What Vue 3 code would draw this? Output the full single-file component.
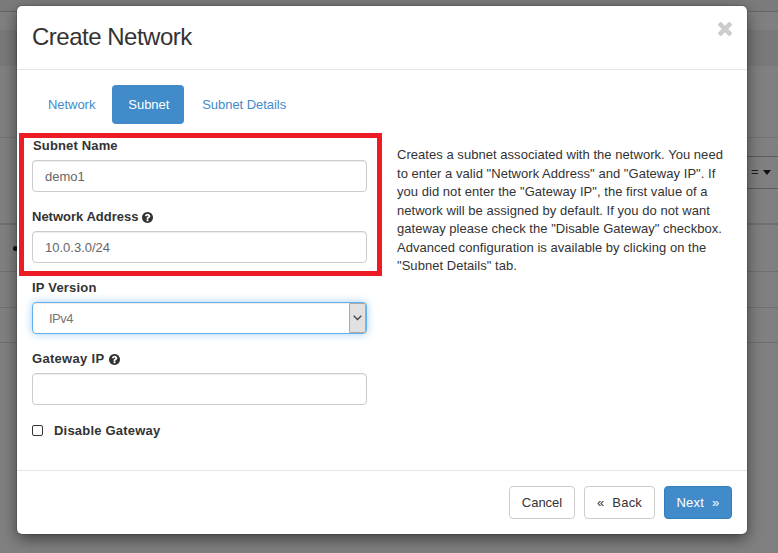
<script setup>
import { ref } from 'vue'

const tabs = ['Network', 'Subnet', 'Subnet Details']
const active = ref('Subnet')
const subnetName = ref('demo1')
const address = ref('10.0.3.0/24')
const gateway = ref('')
const helpLines = [
  'Creates a subnet associated with the network. You need',
  'to enter a valid "Network Address" and "Gateway IP". If',
  'you did not enter the "Gateway IP", the first value of a',
  'network will be assigned by default. If you do not want',
  'gateway please check the "Disable Gateway" checkbox.',
  'Advanced configuration is available by clicking on the',
  '"Subnet Details" tab.',
]
const helpIcon =
  'M1024 1376v-192q0-14-9-23t-23-9h-192q-14 0-23 9t-9 23v192q0 14 9 23t23 9h192q14 0 23-9t9-23zm256-672q0-88-55.5-163t-138.5-116-170-41q-243 0-371 213-15 24 8 42l132 100q7 6 19 6 16 0 25-12 53-68 86-92 34-24 86-24 48 0 85.5 26t37.5 59q0 38-20 61t-68 45q-63 28-115.5 86.5t-52.5 125.5v36q0 14 9 23t23 9h192q14 0 23-9t9-23q0-19 21.5-49.5t54.5-49.5q32-18 49-28.5t46-35 44.5-48 28-60.5 12.5-81zm384 192q0 209-103 385.5t-279.5 279.5-385.5 103-385.5-103-279.5-279.5-103-385.5 103-385.5 279.5-279.5 385.5-103 385.5 103 279.5 279.5 103 385.5z'
const closeIcon =
  'M1298 1322q0 40-28 68l-136 136q-28 28-68 28t-68-28l-294-294-294 294q-28 28-68 28t-68-28l-136-136q-28-28-28-68t28-68l294-294-294-294q-28-28-28-68t28-68l136-136q28-28 68-28t68 28l294 294 294-294q28-28 68-28t68 28l136 136q28 28 28 68t-28 68l-294 294 294 294q28 28 28 68z'
</script>

<template>
  <div class="screen">
    <div class="page">
      <div class="row topbar"></div>
      <div class="row gap"></div>
      <div class="row band"></div>
      <div class="row heading"></div>
      <div class="row tools">
        <div class="filter"><span>=</span><i class="caret"></i></div>
      </div>
      <div class="row line-a"><i class="dot"></i></div>
      <div class="row line-b"></div>
      <div class="row line-c"></div>
    </div>

    <section class="modal">
      <header class="modal-head">
        <h3>Create Network</h3>
        <svg class="close" width="14" height="14" viewBox="110 366 1188 1188"><path :d="closeIcon" fill="#ccc" /></svg>
      </header>

      <div class="modal-body">
        <nav class="tabs">
          <a v-for="t in tabs" :key="t" :class="{ active: t === active }" @click="active = t">{{ t }}</a>
        </nav>
        <div class="columns">
          <form class="fields" @submit.prevent>
            <div class="group">
              <label class="first">Subnet Name</label>
              <input v-model="subnetName" type="text" />
            </div>
            <div class="group">
              <label class="tight">Network Address
                <svg class="help" width="11" height="11" viewBox="128 128 1536 1536"><path :d="helpIcon" fill="#333" /></svg>
              </label>
              <input v-model="address" type="text" />
            </div>
            <div class="group">
              <label>IP Version</label>
              <div class="select" tabindex="0">
                <span>IPv4</span>
                <i class="arrow">
                  <svg width="9" height="6" viewBox="0 0 9 6"><path d="M0.7 0.8 L4.5 4.5 L8.3 0.8" fill="none" stroke="#444" stroke-width="1.3" /></svg>
                </i>
              </div>
            </div>
            <div class="group">
              <label class="wide">Gateway IP
                <svg class="help" width="11" height="11" viewBox="128 128 1536 1536"><path :d="helpIcon" fill="#333" /></svg>
              </label>
              <input v-model="gateway" type="text" />
            </div>
            <div class="check"><i class="box"></i><b>Disable Gateway</b></div>
          </form>
          <div class="info">
            <div v-for="l in helpLines" :key="l">{{ l }}</div>
          </div>
        </div>
      </div>

      <footer class="modal-foot">
        <button class="cancel">Cancel</button>
        <button class="back"><span>«</span><span>Back</span></button>
        <button class="next"><span>Next</span><span>»</span></button>
      </footer>
      <div class="highlight"></div>
    </section>
  </div>
</template>

<style>
body { overflow: hidden; background: #808080; }
</style>

<style scoped>
* { box-sizing: border-box; }
.screen {
  position: relative;
  width: 778px;
  height: 553px;
  padding: 6px 0 0 17px;
  overflow: hidden;
  background: #808080;
  color: #333;
  font: 13px/18.5px "Liberation Sans", Arial, sans-serif;
}
.page { position: absolute; inset: 0; }
.row { border-bottom: 1px solid #6f6f6f; }
.topbar { height: 12px; background: #7b7b7b; border-color: #666; }
.gap { height: 18px; border: 0; }
.band { height: 36px; border: 0; background: #797979; }
.heading { height: 72px; border-color: #747474; }
.tools { height: 87px; padding-top: 18px; border-bottom: 2px solid #6f6f6f; }
.filter {
  display: flex;
  align-items: center;
  gap: 4px;
  width: 48px;
  height: 33px;
  margin-left: 730px;
  padding-left: 21px;
  border: solid #5c5c5c;
  border-width: 1px 0;
  color: #1a1a1a;
}
.caret { margin-top: -1px; border: 4px solid transparent; border-top: 5px solid #111; border-bottom: 0; }
.line-a { height: 47px; padding: 21px 0 0 13px; }
.dot { display: block; width: 5px; height: 5px; border-radius: 50%; background: #111; }
.line-b { height: 36px; }
.line-c { height: 35px; }

.modal {
  position: relative;
  width: 730px;
  height: 528px;
  border-radius: 5px;
  background: #fff;
  box-shadow: 0 0 0 1px rgba(0, 0, 0, 0.12), 0 5px 15px rgba(0, 0, 0, 0.5);
}
.modal-head {
  display: flex;
  justify-content: space-between;
  height: 64px;
  padding: 15px 15px 0;
  border-bottom: 1px solid #e5e5e5;
}
h3 { margin: 0; font-size: 24px; font-weight: 400; line-height: 32px; letter-spacing: -0.5px; }
.close { margin-top: 1px; }
.modal-body { height: 400px; padding: 15px; }
.tabs { display: flex; gap: 2px; height: 39px; }
.tabs a {
  padding: 10px 15px 10px 16px;
  border-radius: 4px;
  color: #428bca;
  line-height: 19px;
  white-space: nowrap;
  letter-spacing: -0.05px;
}
.tabs .active { background: #428bca; color: #fff; }
.columns { display: flex; gap: 30px; padding-top: 13px; }
.fields { width: 335px; }
.group { height: 71px; }
label { display: flex; align-items: center; gap: 4px; height: 19px; margin-bottom: 4px; font-weight: 700; letter-spacing: 0.2px; }
.first { padding-left: 1px; letter-spacing: 0.15px; }
.tight { gap: 4px; letter-spacing: 0; }
.wide { gap: 5px; letter-spacing: 0.3px; }
.help { flex: none; margin-top: -1px; }
input {
  display: block;
  width: 335px;
  height: 32px;
  padding: 6px 12px;
  border: 1px solid #ccc;
  border-radius: 4px;
  outline: 0;
  background: #fff;
  box-shadow: inset 0 1px 1px rgba(0, 0, 0, 0.075);
  color: #666;
  font: inherit;
}
.select {
  display: flex;
  justify-content: space-between;
  height: 32px;
  padding-left: 16px;
  border: 1px solid #66afe9;
  border-radius: 4px;
  outline: 0;
  box-shadow: inset 0 1px 1px rgba(0, 0, 0, 0.075), 0 0 8px rgba(102, 175, 233, 0.6);
  color: #777;
  line-height: 31px;
  letter-spacing: -0.5px;
}
.arrow {
  display: flex;
  align-items: center;
  justify-content: center;
  width: 17px;
  border: 1px solid #aaa;
  border-radius: 0 2px 2px 0;
  background: #e1e1e1;
}
.check { display: flex; align-items: center; gap: 12px; height: 19px; letter-spacing: 0.2px; }
.check b { padding-top: 1px; }
.box { width: 11px; height: 11px; margin-right: -1px; border: 1px solid #333; border-radius: 2px; }
.info { padding-top: 9px; white-space: nowrap; letter-spacing: 0.04px; }
.modal-foot {
  display: flex;
  justify-content: flex-end;
  gap: 9px;
  padding: 15px 15px 0;
  border-top: 1px solid #e5e5e5;
}
button {
  display: flex;
  align-items: center;
  justify-content: center;
  gap: 8px;
  height: 33px;
  padding: 0;
  border: 1px solid #ccc;
  border-radius: 4px;
  background: #fff;
  color: #333;
  font: inherit;
  line-height: 20px;
  letter-spacing: 0.2px;
}
.cancel { width: 66px; letter-spacing: 0; }
.back { width: 71px; }
.next { width: 68px; border-color: #357ebd; background: #428bca; color: #fff; }
.highlight {
  position: absolute;
  left: 2px;
  top: 127px;
  width: 363px;
  height: 143px;
  border: 5px solid #ed1c24;
  pointer-events: none;
}
</style>
